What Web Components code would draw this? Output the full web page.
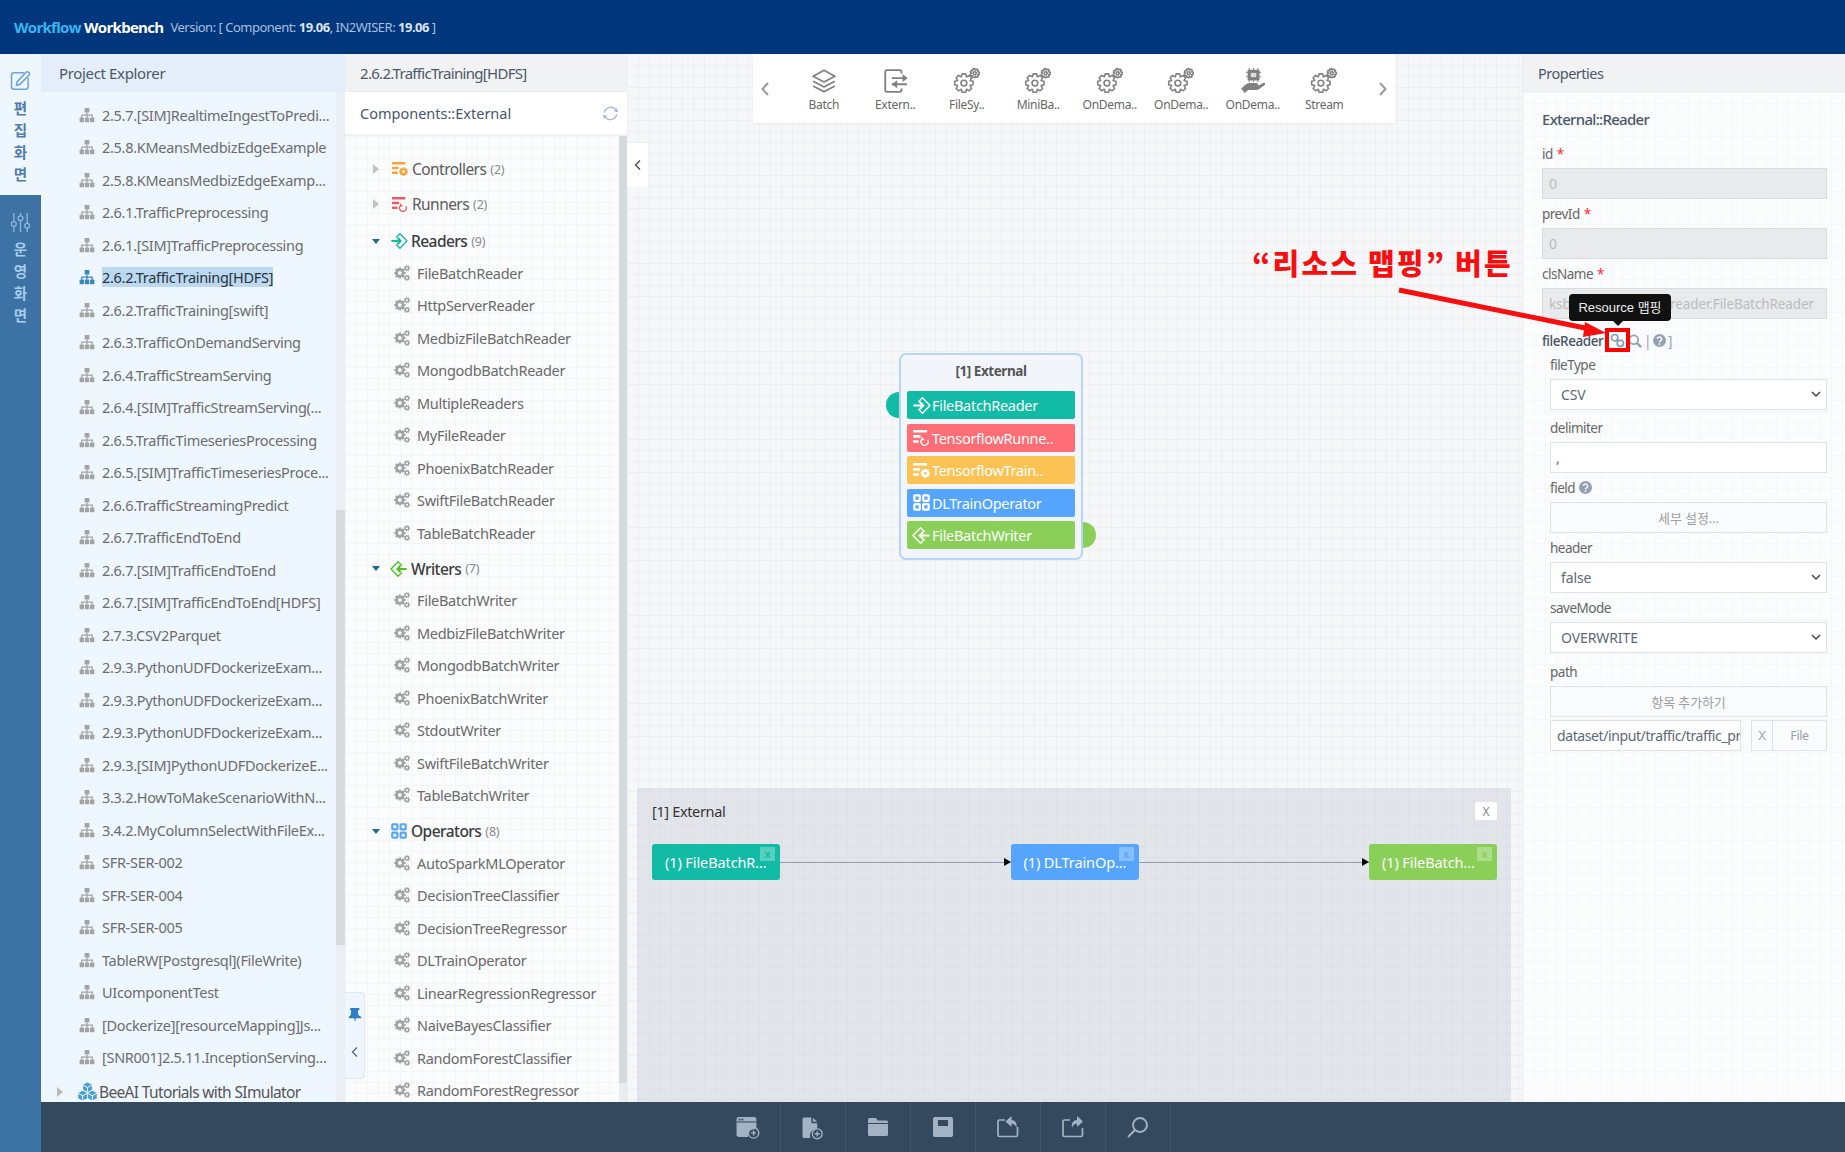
<!DOCTYPE html>
<html>
<head>
<meta charset="utf-8">
<title>Workflow Workbench</title>
<style>
  html, body { margin: 0; padding: 0; background: #fff; overflow: hidden; }
  body { font-family: "Noto Sans", "Noto Sans CJK KR", sans-serif; }
</style>
</head>
<body>
<wf-app>
  <wf-header slot="header"></wf-header>
  <wf-rail slot="rail"></wf-rail>

  <wf-explorer>
    <wf-project>2.5.7.[SIM]RealtimeIngestToPredi...</wf-project>
    <wf-project>2.5.8.KMeansMedbizEdgeExample</wf-project>
    <wf-project>2.5.8.KMeansMedbizEdgeExamp...</wf-project>
    <wf-project>2.6.1.TrafficPreprocessing</wf-project>
    <wf-project>2.6.1.[SIM]TrafficPreprocessing</wf-project>
    <wf-project selected>2.6.2.TrafficTraining[HDFS]</wf-project>
    <wf-project>2.6.2.TrafficTraining[swift]</wf-project>
    <wf-project>2.6.3.TrafficOnDemandServing</wf-project>
    <wf-project>2.6.4.TrafficStreamServing</wf-project>
    <wf-project>2.6.4.[SIM]TrafficStreamServing(...</wf-project>
    <wf-project>2.6.5.TrafficTimeseriesProcessing</wf-project>
    <wf-project>2.6.5.[SIM]TrafficTimeseriesProce...</wf-project>
    <wf-project>2.6.6.TrafficStreamingPredict</wf-project>
    <wf-project>2.6.7.TrafficEndToEnd</wf-project>
    <wf-project>2.6.7.[SIM]TrafficEndToEnd</wf-project>
    <wf-project>2.6.7.[SIM]TrafficEndToEnd[HDFS]</wf-project>
    <wf-project>2.7.3.CSV2Parquet</wf-project>
    <wf-project>2.9.3.PythonUDFDockerizeExam...</wf-project>
    <wf-project>2.9.3.PythonUDFDockerizeExam...</wf-project>
    <wf-project>2.9.3.PythonUDFDockerizeExam...</wf-project>
    <wf-project>2.9.3.[SIM]PythonUDFDockerizeE...</wf-project>
    <wf-project>3.3.2.HowToMakeScenarioWithN...</wf-project>
    <wf-project>3.4.2.MyColumnSelectWithFileEx...</wf-project>
    <wf-project>SFR-SER-002</wf-project>
    <wf-project>SFR-SER-004</wf-project>
    <wf-project>SFR-SER-005</wf-project>
    <wf-project>TableRW[Postgresql](FileWrite)</wf-project>
    <wf-project>UIcomponentTest</wf-project>
    <wf-project>[Dockerize][resourceMapping]Js...</wf-project>
    <wf-project>[SNR001]2.5.11.InceptionServing...</wf-project>
    <wf-project-group>BeeAI Tutorials with SImulator</wf-project-group>
  </wf-explorer>

  <wf-palette>
    <wf-group icon="controllers" tone="#f5a33c" count="2">Controllers</wf-group>
    <wf-group icon="runners" tone="#ee5a62" count="2">Runners</wf-group>
    <wf-group icon="reader" tone="#14b8a0" count="9" open>Readers</wf-group>
    <wf-comp>FileBatchReader</wf-comp>
    <wf-comp>HttpServerReader</wf-comp>
    <wf-comp>MedbizFileBatchReader</wf-comp>
    <wf-comp>MongodbBatchReader</wf-comp>
    <wf-comp>MultipleReaders</wf-comp>
    <wf-comp>MyFileReader</wf-comp>
    <wf-comp>PhoenixBatchReader</wf-comp>
    <wf-comp>SwiftFileBatchReader</wf-comp>
    <wf-comp>TableBatchReader</wf-comp>
    <wf-group icon="writer" tone="#4cc21c" count="7" open>Writers</wf-group>
    <wf-comp>FileBatchWriter</wf-comp>
    <wf-comp>MedbizFileBatchWriter</wf-comp>
    <wf-comp>MongodbBatchWriter</wf-comp>
    <wf-comp>PhoenixBatchWriter</wf-comp>
    <wf-comp>StdoutWriter</wf-comp>
    <wf-comp>SwiftFileBatchWriter</wf-comp>
    <wf-comp>TableBatchWriter</wf-comp>
    <wf-group icon="operators" tone="#55a5f5" count="8" open>Operators</wf-group>
    <wf-comp>AutoSparkMLOperator</wf-comp>
    <wf-comp>DecisionTreeClassifier</wf-comp>
    <wf-comp>DecisionTreeRegressor</wf-comp>
    <wf-comp>DLTrainOperator</wf-comp>
    <wf-comp>LinearRegressionRegressor</wf-comp>
    <wf-comp>NaiveBayesClassifier</wf-comp>
    <wf-comp>RandomForestClassifier</wf-comp>
    <wf-comp>RandomForestRegressor</wf-comp>
  </wf-palette>

  <wf-canvas>
    <wf-toolbar></wf-toolbar>
    <wf-engine-node></wf-engine-node>
    <wf-drawer></wf-drawer>
  </wf-canvas>

  <wf-props>
    <wf-field label="id" required disabled>0</wf-field>
    <wf-field label="prevId" required disabled>0</wf-field>
    <wf-field label="clsName" required disabled split><span>ksb</span><span>.reader.FileBatchReader</span></wf-field>
    <wf-file-reader></wf-file-reader>
    <wf-field nested label="fileType" kind="select">CSV</wf-field>
    <wf-field nested spaced="3" label="delimiter">,</wf-field>
    <wf-field nested label="field" help kind="button">세부 설정...</wf-field>
    <wf-field nested label="header" kind="select">false</wf-field>
    <wf-field nested label="saveMode" kind="select">OVERWRITE</wf-field>
    <wf-field nested spaced="4" label="path" kind="button">항목 추가하기</wf-field>
    <wf-path-row></wf-path-row>
  </wf-props>

  <wf-footer slot="footer"></wf-footer>
  <wf-callout slot="overlay"></wf-callout>
</wf-app>

<script>
// gear outline as a path, so the cog icons can share one shape
function gear(cx, cy, ro, ri, n, hole) {
  var d = ''
  var step = Math.PI * 2 / n
  for (var i = 0; i < n; i++) {
    var a = i * step
    var pts = [[ri, a - step * 0.5], [ro, a - step * 0.24], [ro, a + step * 0.24], [ri, a + step * 0.5]]
    pts.forEach(function (p, j) {
      var x = (cx + p[0] * Math.cos(p[1])).toFixed(2)
      var y = (cy + p[0] * Math.sin(p[1])).toFixed(2)
      d += (i === 0 && j === 0 ? 'M' : 'L') + x + ' ' + y
    })
  }
  d += 'Z'
  if (hole) {
    d += `M${cx - hole} ${cy}a${hole} ${hole} 0 1 0 ${hole * 2} 0a${hole} ${hole} 0 1 0 ${-hole * 2} 0Z`
  }
  return d
}

const ICONS = {
  sitemap: `<g fill="currentColor"><rect x="5.6" y="1" width="4.8" height="4.6" rx=".6"/><rect x=".6" y="10.6" width="4.4" height="4.6" rx=".6"/><rect x="5.8" y="10.6" width="4.4" height="4.6" rx=".6"/><rect x="11" y="10.6" width="4.4" height="4.6" rx=".6"/></g><path d="M8 5.5V10.6M2.8 10.6V8.2H13.2V10.6" fill="none" stroke="currentColor" stroke-width="1.3"/>`,
  cogs: `<path fill="currentColor" fill-rule="evenodd" d="${gear(6.6, 9, 6.4, 4.7, 8, 2.2)}${gear(14.6, 3.6, 3.4, 2.5, 7, 1.2)}${gear(14.6, 14.4, 3.4, 2.5, 7, 1.2)}"/>`,
  controllers: `<g fill="currentColor"><rect y="1" width="15" height="2.8" rx=".4"/><rect y="6.4" width="7.5" height="2.8" rx=".4"/><rect y="11.8" width="6.5" height="2.8" rx=".4"/><path fill-rule="evenodd" d="${gear(13, 12, 5, 3.7, 8, 1.5)}"/></g>`,
  runners: `<g fill="currentColor"><rect y="1" width="15" height="2.8" rx=".4"/><rect y="6.4" width="8" height="2.8" rx=".4"/><rect y="11.8" width="6" height="2.8" rx=".4"/></g><path d="M10 10.4a3.8 3.8 0 1 0 5.6 1.2" fill="none" stroke="currentColor" stroke-width="1.5"/><path d="M9 8v3.8h3.6z" fill="currentColor"/>`,
  reader: `<path d="M5.6 5.2L10 .9 18 9l-8 8.1-4.4-4.3" fill="none" stroke="currentColor" stroke-width="1.5"/><path d="M.4 9h10M7.2 5.4L10.8 9l-3.6 3.6" fill="none" stroke="currentColor" stroke-width="2.2"/>`,
  writer: `<path d="M12.4 5.2L8 .9 0 9l8 8.1 4.4-4.3" fill="none" stroke="currentColor" stroke-width="1.5"/><path d="M17.6 9h-10M10.8 5.4L7.2 9l3.6 3.6" fill="none" stroke="currentColor" stroke-width="2.2"/>`,
  operators: `<g fill="none" stroke="currentColor" stroke-width="2.4"><rect x="1.4" y="1.4" width="5.8" height="5.8" rx=".8"/><rect x="10.8" y="1.4" width="5.8" height="5.8" rx=".8"/><rect x="1.4" y="10.8" width="5.8" height="5.8" rx=".8"/><rect x="10.8" y="10.8" width="5.8" height="5.8" rx=".8"/></g>`,
  refresh: `<g fill="none" stroke="currentColor" stroke-width="1.5"><path d="M2.4 8a6.8 6.8 0 0 1 11.8-3.2"/><path d="M15.6 10a6.8 6.8 0 0 1-11.8 3.2"/></g><path fill="currentColor" d="M17.4 7.6l-2-4.4-2.8 3.6zM.6 10.4l2 4.4 2.8-3.6z"/>`,
  pencil: `<g fill="none" stroke="currentColor" stroke-width="1.6"><path d="M15 2.8H4.2a2.6 2.6 0 0 0-2.6 2.6v12.2a2.6 2.6 0 0 0 2.6 2.6h12.2a2.6 2.6 0 0 0 2.6-2.6V8"/><path d="M7.6 12.2L16.8 2.4a1.7 1.7 0 0 1 2.6 0l.6.6a1.7 1.7 0 0 1 0 2.4l-9.6 9.6-3.6 1z"/></g>`,
  sliders: `<g fill="none" stroke="currentColor" stroke-width="1.4"><path d="M4 1v9M4 15v6M11 1v3M11 9v12M18 1v11M18 17v4"/><circle cx="4" cy="12.5" r="2.5"/><circle cx="11" cy="6.5" r="2.5"/><circle cx="18" cy="14.5" r="2.5"/></g>`,
  layers: `<g fill="none" stroke="currentColor" stroke-width="1.6" stroke-linejoin="round"><path d="M12 2l10 5.6L12 13 2 7.6z"/><path d="M2 12.2L12 17.6l10-5.4"/><path d="M2 16.6L12 22l10-5.4"/></g>`,
  external: `<g fill="none" stroke="currentColor" stroke-width="1.7"><path d="M18 5V3.4A1.6 1.6 0 0 0 16.4 2H4.6A1.6 1.6 0 0 0 3 3.6v17A1.6 1.6 0 0 0 4.6 22h11.8a1.6 1.6 0 0 0 1.6-1.6V19"/><path d="M9 9.4h14M9 15h14"/></g><path fill="currentColor" d="M19 5.6l4.6 3.8L19 13zM14 11.4L9 15l5 3.6z"/>`,
  gears: `<g fill="none" stroke="currentColor" stroke-width="1.5" stroke-linejoin="round"><path d="${gear(9.5, 14.5, 9, 6.4, 8, 2.8)}"/><path d="${gear(20, 5, 4.4, 3.1, 7, 1.4)}"/></g>`,
  aihand: `<g fill="currentColor"><rect x="7" y="1.5" width="11" height="10" rx="1"/><path d="M8.5 0v1.5M12.5 0v1.5M16.5 0v1.5M8.5 11.5V13M12.5 11.5V13M16.5 11.5V13M5.5 4h1.5M5.5 8h1.5M18 4h1.5M18 8h1.5" stroke="currentColor" stroke-width="1"/><path d="M1 19l5-4.2c1-.8 2.2-1 3.4-1h6c1.4 0 1.6 2.2 0 2.4l-3.4.4 6-.8 3.4-2c1.4-.7 2.6 1 1.4 2l-5 3.6c-.8.6-1.6.8-2.6.8H7.6L4.4 23z"/></g><rect x="10" y="4.500" width="5" height="4" fill="#ddd"/>`,
  link: `<g fill="none" stroke="currentColor" stroke-width="1.6"><circle cx="5" cy="5" r="3.4"/><circle cx="11" cy="11" r="3.4"/><path d="M7 7l2 2"/></g>`,
  search: `<g fill="none" stroke="currentColor" stroke-width="2"><circle cx="6.6" cy="6.6" r="5"/><path d="M10.4 10.4L15 15" stroke-width="2.6"/></g>`,
  question: `<circle cx="8" cy="8" r="8" fill="currentColor"/><path d="M5.4 6.2a2.6 2.6 0 1 1 3.9 2.2c-.9.5-1.3.9-1.3 1.9" fill="none" stroke="#fff" stroke-width="1.8"/><rect x="7" y="11.4" width="2" height="2" fill="#fff"/>`,
  pin: `<path fill="currentColor" d="M3 .5h10v2l-1.8 1.2.8 5L15 10.500v1.800H9L8 16.500l-1-4.200H1V10.500l2-1.800.8-5L2 2.500z" transform="translate(0 -.5)"/>`,
  bee: `<g fill="currentColor"><path d="M9 .5l4.2 2.200v4.600L9 9.500 4.800 7.300V2.700z"/><path d="M4.400 8.300l4.200 2.200v4.800l-4.200 2.200L.2 15.300v-4.800z"/><path d="M13.600 8.300l4.200 2.200v4.800l-4.200 2.200-4.200-2.200v-4.800z"/></g><path d="M4.800 3L9 5.200l4.200-2.200M.2 10.800l4.200 2.200 4.200-2.200M9.400 10.800l4.200 2.200 4.200-2.200M9 5.200v4M4.400 13v4.400M13.600 13v4.400" fill="none" stroke="#fff" stroke-width=".9"/>`,
  newapp: `<path fill="currentColor" d="M2.500 1h15A2 2 0 0 1 19.500 3v9.600a6.600 6.600 0 0 0-8 7.400H2.500a2 2 0 0 1-2-2V3a2 2 0 0 1 2-2z"/><path d="M.5 5.700h19" stroke="#34485e" stroke-width="1"/><rect x="2.500" y="2.600" width="1.800" height="1.600" fill="#34485e"/><rect x="5.200" y="2.600" width="1.800" height="1.600" fill="#34485e"/><circle cx="16.800" cy="16.200" r="5" fill="none" stroke="currentColor" stroke-width="1.300"/><path d="M14.300 16.200h5M16.800 13.700v5" stroke="currentColor" stroke-width="1.300"/>`,
  newfile: `<path fill="currentColor" d="M2 .5h7v5.500h5.500v5.300A6.400 6.400 0 0 0 8 20H2a1.500 1.500 0 0 1-1.500-1.500V2A1.500 1.500 0 0 1 2 .5zM10.500.8L14.300 4.600h-3.800z"/><circle cx="14.500" cy="16" r="4.700" fill="none" stroke="currentColor" stroke-width="1.300"/><path d="M12 16h5M14.500 13.500v5" stroke="currentColor" stroke-width="1.300"/>`,
  folder: `<path fill="currentColor" d="M1.700 1h6l2.300 2.600h8.500A1.500 1.500 0 0 1 20 5.100v.9H0V2.700A1.700 1.700 0 0 1 1.700 1zM0 7h20v10.500A1.500 1.500 0 0 1 18.500 19h-17A1.500 1.500 0 0 1 0 17.500z"/>`,
  save: `<path fill="currentColor" fill-rule="evenodd" d="M2 0h16a2 2 0 0 1 2 2v16a2 2 0 0 1-2 2H2a2 2 0 0 1-2-2V2a2 2 0 0 1 2-2zM5 3v6h10V3z"/>`,
  importbox: `<path d="M8 4H2.500A1.500 1.500 0 0 0 1 5.500V19a1.500 1.500 0 0 0 1.500 1.500H19A1.500 1.500 0 0 0 20.500 19V11" fill="none" stroke="currentColor" stroke-width="1.700"/><path fill="currentColor" d="M14.500 0l-6 5.500 6 5.500V7.800c2.500 0 4 1.200 5 4 .8-5-1.500-7.600-5-7.800z"/>`,
  exportbox: `<path d="M8 4H2.500A1.500 1.500 0 0 0 1 5.500V19a1.500 1.500 0 0 0 1.500 1.500H19A1.500 1.500 0 0 0 20.500 19V12" fill="none" stroke="currentColor" stroke-width="1.700"/><path fill="currentColor" d="M15 0l6 5.500-6 5.500V7.800c-2.500 0-4 1.200-5 4-.8-5 1.500-7.600 5-7.800z"/>`,
  lens: `<g fill="none" stroke="currentColor" stroke-width="1.900"><circle cx="13" cy="8" r="7"/><path d="M8 13l-7 7"/></g>`
}

const VIEWBOX = {
  sitemap: 16, cogs: 18, controllers: 18, runners: 18, reader: 18, writer: 18, operators: 18, refresh: 18,
  pencil: 22, sliders: 22, layers: 24, external: 24, gears: 25, aihand: 24, link: 16, search: 16, question: 16,
  pin: 16, bee: 18, newapp: 22, newfile: 20, folder: 20, save: 20, importbox: 22, exportbox: 22, lens: 21
}

window.customElements.define(
  'wf-icon',
  class extends HTMLElement {
    connectedCallback() {
      var name = this.getAttribute('name')
      var size = this.getAttribute('size') || 16
      var box = VIEWBOX[name]
      this.attachShadow({ mode: 'open' }).innerHTML = `
        <style>
          :host { display: inline-flex; flex: none; width: ${size}px; height: ${size}px; }
          svg { width: 100%; height: 100%; display: block; overflow: visible; }
        </style>
        <svg viewBox="0 0 ${box} ${box}">${ICONS[name]}</svg>`
    }
  }
)

// small helper, most elements are just a style and some markup
function element(tag, css, html) {
  window.customElements.define(
    tag,
    class extends HTMLElement {
      connectedCallback() {
        var shadowRoot = this.attachShadow({ mode: 'open' })
        var body = typeof html === 'function' ? html(this) : html
        shadowRoot.innerHTML = `<style>${css}</style>${body}`
      }
    }
  )
}

const GRID = 'linear-gradient(var(--line) 1px, transparent 1px) 0 0 / 11px 11px, linear-gradient(90deg, var(--line) 1px, transparent 1px) 0 0 / 11px 11px'

element('wf-app', `
  :host { display: grid; grid-template: 54px 1fr / 41px 1fr; width: 1845px; height: 1152px; position: relative; overflow: hidden; color: #666; }
  .header { grid-column: 1 / 3; display: block; }
  main { display: flex; flex-direction: column; min-width: 0; min-height: 0; }
  .panels { flex: 1; display: flex; min-height: 0; }
`, `
  <div class="header"><slot name="header"></slot></div>
  <slot name="rail"></slot>
  <main>
    <div class="panels"><slot></slot></div>
    <slot name="footer"></slot>
  </main>
  <slot name="overlay"></slot>
`)

element('wf-header', `
  :host { display: flex; align-items: center; height: 54px; background: #00367c; padding: 0 0 0 14px; box-sizing: border-box; white-space: nowrap; }
  .logo { font-family: "Open Sans", sans-serif; font-weight: 700; font-size: 15px; letter-spacing: -.7px; color: #fff; margin-right: 7px; }
  .logo span { color: #39b5f0; }
  .ver { font-size: 13px; color: #a9bfdc; letter-spacing: -.5px; }
  .ver b { color: #dbe5f1; font-weight: 700; }
`, `
  <div class="logo"><span>Workflow</span> Workbench</div>
  <div class="ver">Version: [ Component: <b>19.06</b>, IN2WISER: <b>19.06</b> ]</div>
`)

element('wf-rail', `
  :host { display: flex; flex-direction: column; background: #3d72a5; width: 41px; font-size: 14.5px; font-weight: 700; line-height: 22px; text-align: center; }
  .tab { display: flex; flex-direction: column; align-items: center; box-sizing: border-box; }
  .edit { height: 141px; background: #eff7fe; color: #4f7cab; padding-top: 16px; }
  .ops { color: #a4cdee; padding-top: 17px; }
  .edit wf-icon { color: #6ea5db; margin-bottom: 6px; }
  .ops wf-icon { color: #8db8dc; margin-bottom: 5px; }
`, `
  <div class="tab edit"><wf-icon name="pencil" size="21"></wf-icon><span>편</span><span>집</span><span>화</span><span>면</span></div>
  <div class="tab ops"><wf-icon name="sliders" size="21"></wf-icon><span>운</span><span>영</span><span>화</span><span>면</span></div>
`)

element('wf-explorer', `
  :host { display: flex; flex-direction: column; flex: none; width: 304px; background: #eff7fe; min-height: 0; }
  .title { height: 38px; flex: none; display: flex; align-items: center; padding-left: 18px; background: #e3eefa; font-size: 15px; letter-spacing: -.35px; color: #4c5866; }
  .body { flex: 1; display: flex; min-height: 0; }
  .list { flex: 1; padding-top: 6.500px; overflow: hidden; min-width: 0; }
  .bar { width: 9px; flex: none; background: linear-gradient(#e9eff5 0 418px, #d6dbdf 418px 853px, #e9eff5 853px); }
`, `
  <div class="title">Project Explorer</div>
  <div class="body"><div class="list"><slot></slot></div><div class="bar"></div></div>
`)

element('wf-project', `
  :host { display: flex; align-items: center; height: 32.5px; padding-left: 38px; color: #6c6c6c; font-size: 14.5px; letter-spacing: -.3px; white-space: nowrap; }
  wf-icon { color: #a3a3a3; margin-right: 7px; }
  :host([selected]) wf-icon { color: #3b87c0; }
  :host([selected]) span { background: #bcd8f0; color: #26343f; }
  span { line-height: 20px; }
`, `<wf-icon name="sitemap" size="16"></wf-icon><span><slot></slot></span>`)

element('wf-project-group', `
  :host { display: flex; align-items: center; height: 36px; padding-left: 16px; color: #555; font-size: 15.5px; letter-spacing: -.65px; white-space: nowrap; }
  .caret { width: 0; height: 0; border: 5px solid transparent; border-left: 6px solid #bbb; border-right: 0; margin-right: 15px; }
  wf-icon { color: #4a9fd0; margin-right: 2px; }
`, `<i class="caret"></i><wf-icon name="bee" size="19"></wf-icon><span><slot></slot></span>`)

element('wf-palette', `
  :host { --line: #f4f5f7; display: flex; flex-direction: column; flex: none; width: 282px; position: relative; background: #fbfcfd; min-height: 0; }
  .title { height: 38px; flex: none; display: flex; align-items: center; padding-left: 15px; background: #f1f2f3; font-size: 15px; letter-spacing: -.7px; color: #4c5866; box-sizing: border-box; border-bottom: 1px solid #ebecee; }
  .sub { height: 44px; flex: none; display: flex; align-items: center; justify-content: space-between; padding: 0 8px 0 15px; background: #fff; font-size: 14.5px; color: #47566a; box-sizing: border-box; border-bottom: 2px solid #eff0f1; }
  .sub wf-icon { color: #a9b9d3; }
  .body { flex: 1; display: flex; min-height: 0; }
  .tree { flex: 1; padding-top: 15.500px; overflow: hidden; background: ${GRID}, #fbfcfd; }
  .bar { width: 8px; flex: none; background: linear-gradient(#d5dadd 0 947px, #e9edf0 947px); }
  .pin { position: absolute; left: 0; top: 938px; width: 20px; height: 87px; box-sizing: border-box; background: #eff6fe; border: 1px solid #dfe7f0; border-left: 0; border-radius: 0 4px 4px 0; display: flex; flex-direction: column; align-items: center; padding-top: 15px; color: #2c7fc4; }
  .pin svg { margin-top: 24px; }
`, `
  <div class="title">2.6.2.TrafficTraining[HDFS]</div>
  <div class="sub">Components::External<wf-icon name="refresh" size="17"></wf-icon></div>
  <div class="body"><div class="tree"><slot></slot></div><div class="bar"></div></div>
  <div class="pin"><wf-icon name="pin" size="14"></wf-icon><svg width="8" height="12" viewBox="0 0 8 12"><path d="M6 1.500L1.500 6 6 10.500" fill="none" stroke="#5a6a7a" stroke-width="1.400"/></svg></div>
`)

element('wf-group', `
  :host { display: flex; align-items: center; height: 35px; box-sizing: border-box; padding-left: 27px; font-size: 15.5px; letter-spacing: -.55px; color: #5b5b5b; white-space: nowrap; }
  :host([open]) { color: #3c3c3c; font-weight: 500; padding-top: 4px; }
  .caret { width: 0; height: 0; margin-right: 13px; border: 5px solid transparent; border-left: 6px solid #c2c2c2; border-right: 0; margin-left: 1px; }
  :host([open]) .caret { margin-left: 0; margin-right: 11px; border: 4.500px solid transparent; border-top: 5.500px solid #1f6a93; border-bottom: 0; }
  wf-icon { margin-right: 4px; }
  small { font-size: 12.500px; letter-spacing: -.2px; color: #8a8a8a; margin-left: 4px; font-weight: 400; }
`, function (host) {
  return `<i class="caret"></i><wf-icon name="${host.getAttribute('icon')}" size="16" style="color:${host.getAttribute('tone')}"></wf-icon>
    <span><slot></slot></span><small>(${host.getAttribute('count')})</small>`
})

element('wf-comp', `
  :host { display: flex; align-items: center; height: 32.5px; padding-left: 49px; font-size: 14.5px; letter-spacing: -.3px; color: #6a6a6a; white-space: nowrap; }
  wf-icon { color: #a2a2a2; margin-right: 7px; }
`, `<wf-icon name="cogs" size="16"></wf-icon><span><slot></slot></span>`)

element('wf-canvas', `
  :host { --line: #edeff2; flex: 1; position: relative; isolation: isolate; min-width: 0; background: ${GRID}, #f6f7f9; overflow: hidden; }
  .collapse { position: absolute; left: 0; top: 89px; width: 21px; height: 44px; background: #fff; border-radius: 0 3px 3px 0; display: flex; align-items: center; justify-content: center; }
`, `
  <div class="collapse"><svg width="8" height="12" viewBox="0 0 8 12"><path d="M6 1.500L1.500 6 6 10.500" fill="none" stroke="#4a4a4a" stroke-width="1.400"/></svg></div>
  <slot></slot>
`)

const TOOLS = [
  ['layers', 'Batch'], ['external', 'Extern..'], ['gears', 'FileSy..'], ['gears', 'MiniBa..'],
  ['gears', 'OnDema..'], ['gears', 'OnDema..'], ['aihand', 'OnDema..'], ['gears', 'Stream']
]

element('wf-toolbar', `
  :host { position: absolute; left: 126px; top: 0; width: 642px; height: 69px; background: #fff; box-shadow: 0 1px 2px rgba(0,0,0,.06); display: flex; align-items: center; justify-content: space-between; padding: 0 7px; box-sizing: border-box; }
  .items { display: flex; justify-content: center; flex: 1; }
  .tool { width: 71.500px; flex: none; display: flex; flex-direction: column; align-items: center; font-size: 12px; letter-spacing: -.3px; color: #666; padding-top: 4px; }
  .tool wf-icon { color: #808080; margin-bottom: 2px; }
  .nav { color: #9a9a9a; display: flex; }
`, `
  <span class="nav"><svg width="10" height="16" viewBox="0 0 10 16"><path d="M8 2L2.500 8 8 14" fill="none" stroke="currentColor" stroke-width="2"/></svg></span>
  <div class="items">${TOOLS.map(function (t) {
    return `<div class="tool"><wf-icon name="${t[0]}" size="26"></wf-icon><span>${t[1]}</span></div>`
  }).join('')}</div>
  <span class="nav"><svg width="10" height="16" viewBox="0 0 10 16"><path d="M2 2l5.500 6L2 14" fill="none" stroke="currentColor" stroke-width="2"/></svg></span>
`)

const NODE_ROWS = [
  ['reader', 'FileBatchReader', '#12bba5'], ['runners', 'TensorflowRunne..', '#ff6d75'],
  ['controllers', 'TensorflowTrain..', '#fcc253'], ['operators', 'DLTrainOperator', '#55a5ff'],
  ['writer', 'FileBatchWriter', '#8acf58']
]

// the engine node sits on the free canvas, the ports hang off its sides
element('wf-engine-node', `
  :host { position: absolute; left: 272px; top: 299px; width: 184px; height: 207px; box-sizing: border-box; background: #f2f5fa; border: 2px solid #b6d5f7; border-radius: 7px; padding: 0 6px; }
  .title { height: 32px; margin-bottom: 4px; display: flex; align-items: center; justify-content: center; font-size: 13.500px; font-weight: 700; color: #555; letter-spacing: -.45px; }
  .row { height: 28px; margin-bottom: 4.500px; border-radius: 2px; color: #fff; font-size: 14.500px; letter-spacing: -.3px; display: flex; align-items: center; padding-left: 6px; white-space: nowrap; }
  .row wf-icon { margin-right: 2px; }
  .port { position: absolute; z-index: -1; width: 26px; height: 26px; border-radius: 50%; }
  .in { left: -15px; top: 37px; background: #12bba5; }
  .out { right: -15px; top: 167px; background: #8acf58; }
`, `
  <div class="port in"></div><div class="port out"></div>
  <div class="title">[1] External</div>
  ${NODE_ROWS.map(function (r) {
    return `<div class="row" style="background:${r[2]}"><wf-icon name="${r[0]}" size="17"></wf-icon>${r[1]}</div>`
  }).join('')}
`)

element('wf-drawer', `
  :host { position: absolute; left: 10px; right: 11px; bottom: 0; height: 314px; box-sizing: border-box; background: rgba(205,211,219,.5); padding: 0 14px 0 15px; }
  .head { height: 46px; margin-bottom: 10px; display: flex; align-items: center; justify-content: space-between; font-size: 14.500px; letter-spacing: -.35px; color: #333; }
  .close { width: 22px; height: 18px; background: #fff; border-radius: 2px; font-size: 12px; letter-spacing: 0; color: #7a8696; display: flex; align-items: center; justify-content: center; }
  .flow { display: flex; align-items: center; }
  .task { position: relative; width: 128px; height: 36px; flex: none; border-radius: 3px; color: #fff; font-size: 14.500px; letter-spacing: -.1px; display: flex; align-items: center; padding-left: 13px; box-sizing: border-box; white-space: nowrap; }
  .task i { position: absolute; right: 5px; top: 3px; width: 15px; height: 14px; background: rgba(255,255,255,.3); font: 700 11px/14px "Liberation Sans", sans-serif; letter-spacing: 0; text-align: center; }
  .link { flex: 1; height: 1px; background: #8f9db4; position: relative; }
  .link::after { content: ""; position: absolute; right: 0; top: -4px; border: 4.500px solid transparent; border-left: 7px solid #000; border-right: 0; }
`, `
  <div class="head">[1] External<div class="close">X</div></div>
  <div class="flow">
    <div class="task" style="background:#12bba5">(1) FileBatchR...<i style="color:#12bba5">x</i></div>
    <div class="link"></div>
    <div class="task" style="background:#55a5ff">(1) DLTrainOp...<i style="color:#55a5ff">x</i></div>
    <div class="link"></div>
    <div class="task" style="background:#8acf58">(1) FileBatch...<i style="color:#8acf58">x</i></div>
  </div>
`)

element('wf-props', `
  :host { --line: #f6f7f8; display: flex; flex-direction: column; flex: none; width: 323px; background: #fbfcfd; border-left: 1px solid #e9ebee; box-sizing: border-box; min-height: 0; }
  .title { height: 38px; flex: none; display: flex; align-items: center; padding-left: 15px; background: #f1f2f3; font-size: 14.500px; letter-spacing: -.5px; color: #4c5866; border-bottom: 1px solid #ebecee; box-sizing: border-box; }
  .body { flex: 1; padding: 0 18px 0 19px; background: ${GRID}, #fbfcfd; }
  h3 { margin: 0; height: 47px; display: flex; align-items: center; font-size: 15px; font-weight: 500; letter-spacing: -.7px; color: #4a5866; padding-top: 7px; box-sizing: border-box; }
`, `
  <div class="title">Properties</div>
  <div class="body"><h3>External::Reader</h3><slot></slot></div>
`)

element('wf-field', `
  :host { display: block; font-size: 13.500px; color: #666; letter-spacing: -.5px; }
  :host([nested]) { margin-left: 8px; }
  label { display: flex; align-items: center; height: 29px; gap: 4px; }
  b { color: #ff2a2a; font-weight: 400; }
  label wf-icon { color: #93a2b1; }
  .box { height: 31px; box-sizing: border-box; border: 1px solid #dfe3e8; background: #fff; display: flex; align-items: center; padding: 0 9px; font-size: 14px; color: #5d6874; letter-spacing: -.1px; white-space: nowrap; overflow: hidden; }
  .disabled { background: #e9eaeb; border-color: #d9dcdf; color: #bcbcbc; padding: 0 6px; }
  .split { justify-content: space-between; padding-right: 12px; font-size: 13.500px; }
  .select { justify-content: space-between; padding: 0 5px 0 10px; }
  .button { justify-content: center; background: #fafbfc; color: #9a9fa6; font-size: 13px; }
  .plain { padding: 0 5px; }
`, function (host) {
  var kind = host.getAttribute('kind')
  var cls = host.hasAttribute('disabled') ? 'disabled' : kind || 'plain'
  if (host.hasAttribute('split')) cls += ' split'
  var chevron = kind === 'select'
    ? '<svg width="10" height="7" viewBox="0 0 10 7"><path d="M1 1l4 4 4-4" fill="none" stroke="#444" stroke-width="1.500"/></svg>'
    : ''
  var spaced = host.getAttribute('spaced') || 0
  return `<label style="margin-top:${spaced}px">${host.getAttribute('label')}
      ${host.hasAttribute('required') ? '<b>*</b>' : ''}
      ${host.hasAttribute('help') ? '<wf-icon name="question" size="13"></wf-icon>' : ''}</label>
    <div class="box ${cls}"><slot></slot>${chevron}</div>`
})

element('wf-file-reader', `
  :host { display: flex; align-items: center; height: 19px; padding-top: 12px; font-size: 13.500px; font-weight: 500; letter-spacing: -.45px; color: #46535f; }
  .name { width: 68px; }
  .tools { display: flex; align-items: center; gap: 2px; font-weight: 400; color: #93a2b1; }
  .tools wf-icon:first-child { color: #7f97b3; margin-right: 1px; }
`, `<span class="name">fileReader</span><span class="tools"><wf-icon name="link" size="15"></wf-icon><wf-icon name="search" size="14"></wf-icon><span>|</span><wf-icon name="question" size="13"></wf-icon><span>]</span></span>`)

element('wf-path-row', `
  :host { display: flex; margin: 3px 0 0 8px; font-size: 14px; letter-spacing: -.4px; height: 31px; white-space: nowrap; }
  div { box-sizing: border-box; border: 1px solid #dfe3e8; background: #fff; display: flex; align-items: center; overflow: hidden; }
  .path { width: 191px; padding-left: 6px; color: #5d6874; margin-right: 10px; }
  .x { width: 22px; justify-content: center; background: #fafbfc; color: #9a9fa6; font-size: 12.500px; }
  .file { flex: 1; justify-content: center; background: #fafbfc; color: #9a9fa6; font-size: 12.500px; border-left: 0; }
`, `<div class="path">dataset/input/traffic/traffic_pr</div><div class="x">X</div><div class="file">File</div>`)

const FOOTER_ICONS = [['newapp', 23], ['newfile', 21], ['folder', 20], ['save', 20], ['importbox', 22], ['exportbox', 22], ['lens', 21]]

element('wf-footer', `
  :host { display: flex; justify-content: center; height: 50px; background: #34485e; color: #a3b3c5; flex: none; }
  div { width: 65px; box-sizing: border-box; border-right: 1px solid #43566c; display: flex; align-items: center; justify-content: center; }
  div:first-child { width: 66px; border-left: 1px solid #43566c; }
`, `${FOOTER_ICONS.map(function (f) {
  return `<div><wf-icon name="${f[0]}" size="${f[1]}"></wf-icon></div>`
}).join('')}`)

// hand-drawn style annotation on top of the screenshot
element('wf-callout', `
  :host { position: absolute; inset: 0; pointer-events: none; display: block; }
  .note { position: absolute; left: 1252px; top: 244px; font: 900 29px/36px "Noto Sans CJK KR", sans-serif; letter-spacing: 2.200px; color: #f50f0f; white-space: nowrap; }
  svg { position: absolute; left: 0; top: 0; }
  .tip { position: absolute; left: 1569px; top: 294px; width: 102px; height: 27px; background: #111; color: #eee; border-radius: 4px; font: 13px/27px "Liberation Sans", "Noto Sans CJK KR", sans-serif; text-align: center; white-space: nowrap; }
  .tip::after { content: ""; position: absolute; left: 44px; bottom: -5px; border: 5px solid transparent; border-top: 5px solid #111; border-bottom: 0; }
  .mark { position: absolute; left: 1605px; top: 328px; width: 25px; height: 24px; box-sizing: border-box; border: 4px solid #f00; }
`, `
  <div class="note">“리소스 맵핑” 버튼</div>
  <svg width="1845" height="1152"><path d="M1399 290L1590 329" stroke="#f50f0f" stroke-width="5"/><path d="M1606 333L1585 322 1583 337z" fill="#f50f0f"/></svg>
  <div class="tip">Resource 맵핑</div>
  <div class="mark"></div>
`)
</script>
</body>
</html>
